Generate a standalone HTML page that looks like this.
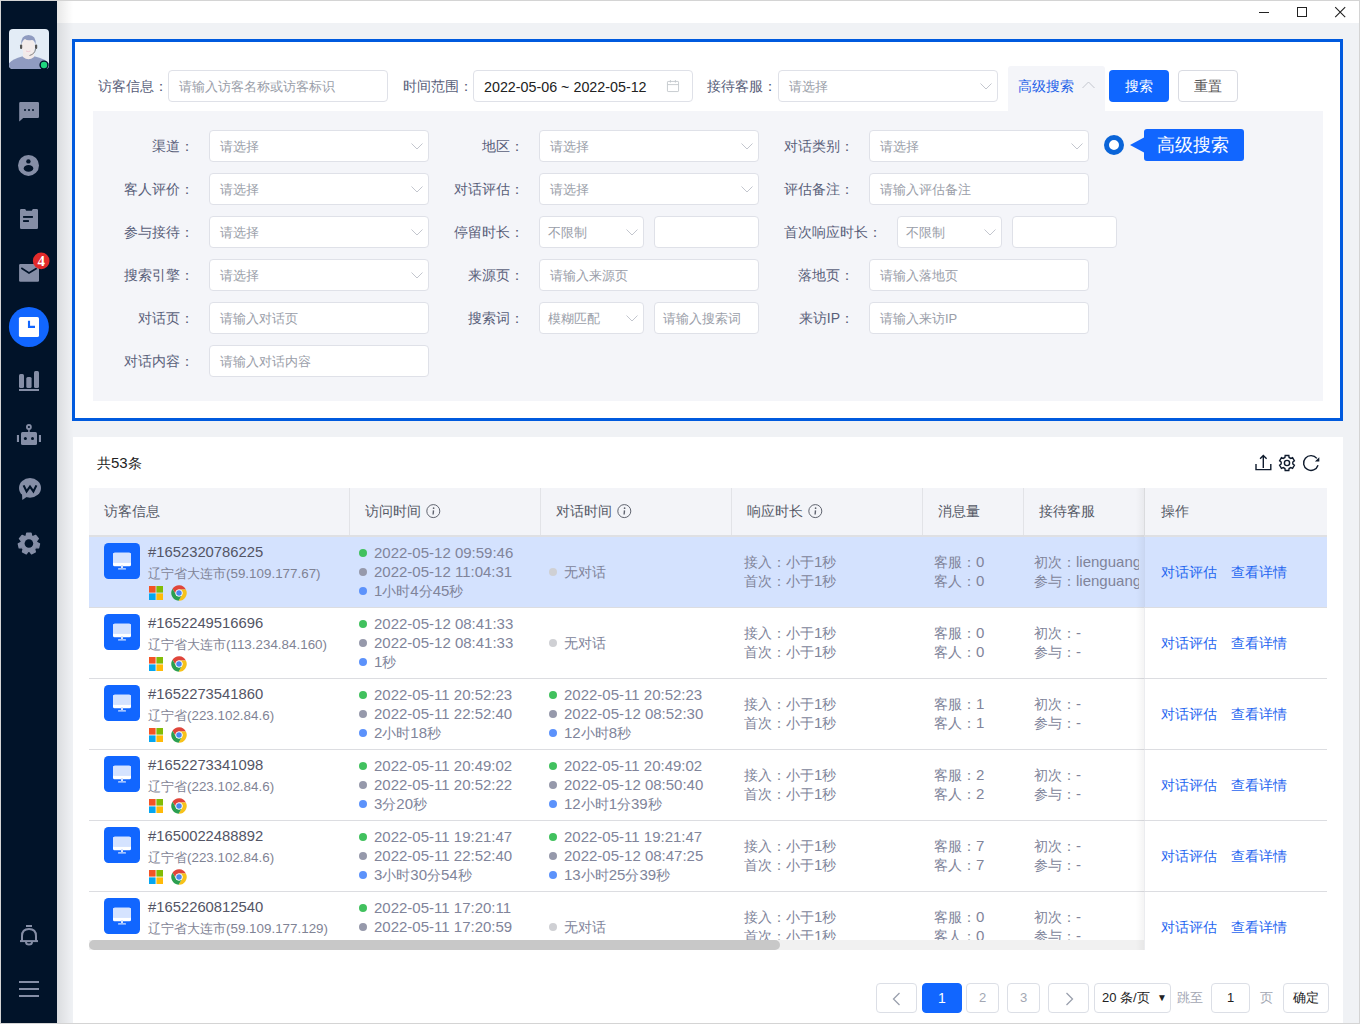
<!DOCTYPE html>
<html><head><meta charset="utf-8"><style>
*{box-sizing:border-box;margin:0;padding:0}
html,body{width:1360px;height:1024px;overflow:hidden}
body{position:relative;background:#f0f2f5;font-family:"Liberation Sans",sans-serif;font-size:14px;color:#333}
.abs{position:absolute}
.frame{position:absolute;left:0;top:0;width:1360px;height:1024px;border:1px solid #d4d4d4;pointer-events:none;z-index:50}
#side{position:absolute;left:1px;top:1px;width:56px;height:1022px;background:#011329;z-index:5}
#top{position:absolute;left:57px;top:1px;width:1302px;height:22px;background:#fff}
#shadow{position:absolute;left:57px;top:1px;width:16px;height:1022px;background:linear-gradient(to right,rgba(0,0,0,.09),rgba(0,0,0,0));z-index:4}
.wc{position:absolute;top:0;height:22px}
#card1{position:absolute;left:72px;top:39px;width:1271px;height:382px;background:#fff;border:3px solid #005ade}
#adv{position:absolute;left:93px;top:111px;width:1230px;height:290px;background:#f4f5f9}
.lbl{position:absolute;white-space:nowrap;color:#59607a;font-size:14px;line-height:32px;text-align:right}
.inp{position:absolute;height:32px;background:#fff;border:1px solid #dfe1e8;border-radius:4px;white-space:nowrap;line-height:30px;padding-left:10px;padding-top:1px;color:#9a9ea9;font-size:14px;overflow:hidden}
.sel::after{content:"";position:absolute;right:12px;top:10px;width:7px;height:7px;border-right:1px solid #b8bcc6;border-bottom:1px solid #b8bcc6;transform:rotate(45deg)}
#card2{position:absolute;left:73px;top:437px;width:1270px;height:586px;background:#fff}

.tx{position:absolute;white-space:nowrap}
.id{font-size:14.8px;line-height:20px;color:#535565}
.ad{font-size:13px;line-height:18px;color:#7f8395}
.dt{font-size:15px;line-height:20px;color:#80849a}
.du{font-size:14px;line-height:20px;color:#80849a}
.du b.n{font-weight:normal;font-size:15px}
.rs{font-size:14px;line-height:18.8px;color:#80849a}
.rs b.m{font-weight:normal;font-size:15px}
.op{font-size:14px;line-height:20px;color:#1f66f0}
.dot{position:absolute;width:8px;height:8px;border-radius:50%}
.vl{position:absolute;top:488px;width:1px;height:47px;background:#e2e3e7}
.th{position:absolute;top:501px;line-height:20px;font-size:14px;color:#555966;white-space:nowrap}
.pg{position:absolute;top:983px;height:30px;border:1px solid #dcdfe6;border-radius:4px;text-align:center;line-height:28px;font-size:14px;background:#fff}
</style></head><body>
<div id="side"></div>
<svg class="abs" style="left:0;top:0;z-index:6" width="60" height="1024" viewBox="0 0 60 1024">
<defs><clipPath id="avc"><rect x="9" y="29" width="40" height="40" rx="4"/></clipPath></defs>
<g clip-path="url(#avc)">
<rect x="9" y="29" width="40" height="40" fill="#e3ecf6"/>
<path d="M5 70 Q8 60 22 56.5 L35 56.5 Q50 60 53 70Z" fill="#8f9bc0"/>
<path d="M23 50 L34 50 L34 57 Q28.5 61.5 23 57Z" fill="#f1eae9"/>
<ellipse cx="28.2" cy="46" rx="6.6" ry="8" fill="#f3eceb"/>
<path d="M21.3 45 Q20.5 35 28.5 35 Q36.5 35 35.6 45 Q34.5 40 32 40 Q27 41 25 39 Q22.5 40 21.3 45Z" fill="#8f9bc0"/>
<rect x="20" y="44.5" width="2.2" height="4.5" rx="1.1" fill="#555"/>
<rect x="35" y="44.5" width="2.2" height="4.5" rx="1.1" fill="#555"/>
<path d="M35.5 49 Q35 54 29.5 55.5" fill="none" stroke="#555" stroke-width=".7"/>
<path d="M26 51 Q28.3 52.3 30.5 51" fill="none" stroke="#eabccc" stroke-width=".7"/>
</g>
<circle cx="44" cy="65" r="4.6" fill="#011329"/>
<circle cx="44" cy="65" r="3.2" fill="#1ed67e"/>
<g fill="#858ea6">
<!-- chat -->
<path d="M20.2 102H37.8Q39 102 39 103.2V116.7Q39 117.9 37.8 117.9H23.2L19.6 121.3Q19.2 121.6 19.2 121V103.2Q19.2 102 20.4 102Z"/>
<!-- person -->
<circle cx="28.5" cy="165.4" r="10.5"/>
<!-- clipboard -->
<path d="M21.3 209H25.2L26.2 210.8H31.8L32.8 209H36.7Q38 209 38 210.3V227.7Q38 229 36.7 229H21.3Q20 229 20 227.7V210.3Q20 209 21.3 209Z"/>
<!-- mail -->
<rect x="19.1" y="264" width="19.9" height="17.8" rx="1.2"/>
<!-- bars -->
<rect x="19" y="374" width="5" height="14" rx="1.5"/>
<rect x="26.3" y="377" width="5.3" height="11" rx="1.5"/>
<rect x="34" y="371" width="5" height="17" rx="1.5"/>
<rect x="19" y="389" width="20" height="2"/>
<!-- robot -->
<circle cx="28.9" cy="427" r="2.9"/>
<rect x="28.2" y="429" width="1.5" height="4"/>
<rect x="21" y="432" width="16" height="13" rx="1.5"/>
<rect x="16.9" y="435" width="2.1" height="7"/>
<rect x="38.9" y="435" width="2.1" height="7"/>
<!-- W bubble -->
<ellipse cx="30" cy="487.9" rx="11" ry="9.8"/>
<path d="M22 493 L22.3 500 L28 496Z"/>
<!-- gear -->
<path d="M26.12 536.11 L26.79 533.11 L31.01 533.11 L31.68 536.11 L32.95 536.71 L35.71 535.38 L38.34 538.67 L36.42 541.07 L36.73 542.43 L39.50 543.76 L38.56 547.86 L35.49 547.86 L34.62 548.95 L35.30 551.95 L31.51 553.77 L29.60 551.37 L28.20 551.37 L26.29 553.77 L22.50 551.95 L23.18 548.95 L22.31 547.86 L19.24 547.86 L18.30 543.76 L21.07 542.43 L21.38 541.07 L19.46 538.67 L22.09 535.38 L24.85 536.71Z" stroke="#858ea6" stroke-width="1.4" stroke-linejoin="round"/>
</g>
<g fill="#011329">
<circle cx="25" cy="110" r="1"/><circle cx="29" cy="110" r="1"/><circle cx="33" cy="110" r="1"/>
<circle cx="28.4" cy="161.4" r="2.2"/>
<ellipse cx="28.5" cy="168.4" rx="4.8" ry="3.4"/>
<rect x="23.1" y="216" width="9.8" height="1.9"/>
<rect x="23.1" y="220.1" width="5.8" height="1.9"/>
<circle cx="28.9" cy="427" r="1.1"/>
<circle cx="25.4" cy="438.5" r="1.5"/><circle cx="32.5" cy="438.5" r="1.5"/>
<circle cx="28.9" cy="543.5" r="4.3"/>
</g>
<path d="M21.3 268L29 273L36.7 268.3" fill="none" stroke="#011329" stroke-width="1.7"/>
<path d="M23.6 485.4L26.6 491.4L30 486.6L33.4 491.4L36.4 485.4" fill="none" stroke="#011329" stroke-width="2.1" stroke-linejoin="miter"/>
<!-- badge -->
<circle cx="41.2" cy="260.9" r="8.3" fill="#e22b2b"/>
<text x="41.3" y="266.3" font-family="Liberation Serif" font-weight="bold" font-size="15" fill="#fff" text-anchor="middle">4</text>
<!-- clock active -->
<circle cx="28.9" cy="326.9" r="20" fill="#1166ff"/>
<rect x="18.9" y="316.9" width="20.1" height="20.1" rx="1.6" fill="#fff"/>
<path d="M29 320.8V326.9H35" fill="none" stroke="#1166ff" stroke-width="2.1"/>
<!-- bell -->
<g fill="none" stroke="#858ea6" stroke-width="2">
<path d="M26 926H32"/>
<path d="M22 941V936Q22 929 29 929Q36 929 36 936V941"/>
<path d="M20 941.1H38"/>
<path d="M26 942Q26 944.5 29 944.5Q32 944.5 32 942"/>
<path d="M19 982H39M19 989H39M19 996H39"/>
</g>
</svg>

<div id="top"></div>
<div id="shadow"></div>
<div class="frame"></div>

<!-- window controls -->
<div class="abs" style="left:1259px;top:12px;width:10px;height:1px;background:#222"></div>
<div class="abs" style="left:1297px;top:7px;width:10px;height:10px;border:1px solid #222"></div>
<svg class="abs" style="left:1334px;top:6px" width="13" height="13" viewBox="0 0 13 13"><path d="M1.2 1.2L11.2 11.2M11.2 1.2L1.2 11.2" stroke="#222" stroke-width="1.1"/></svg>

<div id="card1"></div>
<div id="adv"></div>
<div class="lbl" style="left:98px;top:70px">访客信息：</div>
<div class="inp" style="left:168px;top:70px;width:220px;padding-left:10px;font-size:13px">请输入访客名称或访客标识</div>
<div class="lbl" style="left:403px;top:70px">时间范围：</div>
<div class="inp" style="left:473px;top:70px;width:220px;padding-left:10px;font-size:13px"><span style="color:#222;font-size:14.3px">2022-05-06 ~ 2022-05-12</span></div>
<div class="lbl" style="left:707px;top:70px">接待客服：</div>
<div class="inp" style="left:778px;top:70px;width:220px;padding-left:10px;font-size:13px">请选择</div>
<svg class="abs" style="left:980px;top:83px" width="12" height="7" viewBox="0 0 12 7"><path d="M0.5 0.5L6 6L11.5 0.5" fill="none" stroke="#c3c6ce" stroke-width="1"/></svg>
<div class="lbl" style="right:1166px;top:130px">渠道：</div>
<div class="inp" style="left:209px;top:130px;width:220px;padding-left:10px;font-size:13px">请选择</div>
<svg class="abs" style="left:411px;top:143px" width="12" height="7" viewBox="0 0 12 7"><path d="M0.5 0.5L6 6L11.5 0.5" fill="none" stroke="#c3c6ce" stroke-width="1"/></svg>
<div class="lbl" style="right:1166px;top:173px">客人评价：</div>
<div class="inp" style="left:209px;top:173px;width:220px;padding-left:10px;font-size:13px">请选择</div>
<svg class="abs" style="left:411px;top:186px" width="12" height="7" viewBox="0 0 12 7"><path d="M0.5 0.5L6 6L11.5 0.5" fill="none" stroke="#c3c6ce" stroke-width="1"/></svg>
<div class="lbl" style="right:1166px;top:216px">参与接待：</div>
<div class="inp" style="left:209px;top:216px;width:220px;padding-left:10px;font-size:13px">请选择</div>
<svg class="abs" style="left:411px;top:229px" width="12" height="7" viewBox="0 0 12 7"><path d="M0.5 0.5L6 6L11.5 0.5" fill="none" stroke="#c3c6ce" stroke-width="1"/></svg>
<div class="lbl" style="right:1166px;top:259px">搜索引擎：</div>
<div class="inp" style="left:209px;top:259px;width:220px;padding-left:10px;font-size:13px">请选择</div>
<svg class="abs" style="left:411px;top:272px" width="12" height="7" viewBox="0 0 12 7"><path d="M0.5 0.5L6 6L11.5 0.5" fill="none" stroke="#c3c6ce" stroke-width="1"/></svg>
<div class="lbl" style="right:1166px;top:302px">对话页：</div>
<div class="inp" style="left:209px;top:302px;width:220px;padding-left:10px;font-size:13px">请输入对话页</div>
<div class="lbl" style="right:1166px;top:345px">对话内容：</div>
<div class="inp" style="left:209px;top:345px;width:220px;padding-left:10px;font-size:13px">请输入对话内容</div>
<div class="lbl" style="right:836px;top:130px">地区：</div>
<div class="inp" style="left:539px;top:130px;width:220px;padding-left:10px;font-size:13px">请选择</div>
<svg class="abs" style="left:741px;top:143px" width="12" height="7" viewBox="0 0 12 7"><path d="M0.5 0.5L6 6L11.5 0.5" fill="none" stroke="#c3c6ce" stroke-width="1"/></svg>
<div class="lbl" style="right:836px;top:173px">对话评估：</div>
<div class="inp" style="left:539px;top:173px;width:220px;padding-left:10px;font-size:13px">请选择</div>
<svg class="abs" style="left:741px;top:186px" width="12" height="7" viewBox="0 0 12 7"><path d="M0.5 0.5L6 6L11.5 0.5" fill="none" stroke="#c3c6ce" stroke-width="1"/></svg>
<div class="lbl" style="right:836px;top:216px">停留时长：</div>
<div class="inp" style="left:539px;top:216px;width:105px;padding-left:8px;font-size:13px">不限制</div>
<svg class="abs" style="left:626px;top:229px" width="12" height="7" viewBox="0 0 12 7"><path d="M0.5 0.5L6 6L11.5 0.5" fill="none" stroke="#c3c6ce" stroke-width="1"/></svg>
<div class="inp" style="left:654px;top:216px;width:105px;padding-left:10px;font-size:13px"></div>
<div class="lbl" style="right:836px;top:259px">来源页：</div>
<div class="inp" style="left:539px;top:259px;width:220px;padding-left:10px;font-size:13px">请输入来源页</div>
<div class="lbl" style="right:836px;top:302px">搜索词：</div>
<div class="inp" style="left:539px;top:302px;width:105px;padding-left:8px;font-size:13px">模糊匹配</div>
<svg class="abs" style="left:626px;top:315px" width="12" height="7" viewBox="0 0 12 7"><path d="M0.5 0.5L6 6L11.5 0.5" fill="none" stroke="#c3c6ce" stroke-width="1"/></svg>
<div class="inp" style="left:654px;top:302px;width:105px;padding-left:8px;font-size:13px">请输入搜索词</div>
<div class="lbl" style="right:506px;top:130px">对话类别：</div>
<div class="inp" style="left:869px;top:130px;width:220px;padding-left:10px;font-size:13px">请选择</div>
<svg class="abs" style="left:1071px;top:143px" width="12" height="7" viewBox="0 0 12 7"><path d="M0.5 0.5L6 6L11.5 0.5" fill="none" stroke="#c3c6ce" stroke-width="1"/></svg>
<div class="lbl" style="right:506px;top:173px">评估备注：</div>
<div class="inp" style="left:869px;top:173px;width:220px;padding-left:10px;font-size:13px">请输入评估备注</div>
<div class="lbl" style="left:784px;top:216px">首次响应时长：</div>
<div class="inp" style="left:897px;top:216px;width:105px;padding-left:8px;font-size:13px">不限制</div>
<svg class="abs" style="left:984px;top:229px" width="12" height="7" viewBox="0 0 12 7"><path d="M0.5 0.5L6 6L11.5 0.5" fill="none" stroke="#c3c6ce" stroke-width="1"/></svg>
<div class="inp" style="left:1012px;top:216px;width:105px;padding-left:10px;font-size:13px"></div>
<div class="lbl" style="right:506px;top:259px">落地页：</div>
<div class="inp" style="left:869px;top:259px;width:220px;padding-left:10px;font-size:13px">请输入落地页</div>
<div class="lbl" style="right:506px;top:302px">来访IP：</div>
<div class="inp" style="left:869px;top:302px;width:220px;padding-left:10px;font-size:13px">请输入来访IP</div>
<svg class="abs" style="left:666px;top:79px" width="14" height="14" viewBox="0 0 14 14"><g fill="none" stroke="#c3c7cc" stroke-width="0.9"><rect x="1.45" y="2.45" width="11.1" height="10.1" rx=".6"/><path d="M1.5 5.6H12.5M4.4 1V3.6M9.4 1V3.6"/></g></svg>
<!-- tab + buttons -->
<div class="abs" style="left:1008px;top:66px;width:97px;height:45px;background:#f4f5f9;border-radius:3px 3px 0 0"></div>
<div class="abs" style="left:1018px;top:70px;line-height:32px;color:#1f62e8;white-space:nowrap">高级搜索</div>
<svg class="abs" style="left:1082px;top:81px" width="13" height="8" viewBox="0 0 13 8"><path d="M0.5 7L6.5 1L12.5 7" fill="none" stroke="#c3c6ce" stroke-width="1"/></svg>
<div class="abs" style="left:1109px;top:70px;width:60px;height:32px;background:#0f66ff;border-radius:4px;color:#fff;text-align:center;line-height:32px">搜索</div>
<div class="abs" style="left:1178px;top:70px;width:60px;height:32px;background:#fff;border:1px solid #d9dbe2;border-radius:4px;color:#555;text-align:center;line-height:30px">重置</div>
<!-- annotation -->
<div class="abs" style="left:1104px;top:135px;width:20px;height:20px;border-radius:50%;border:5px solid #0a64d8;background:#fff"></div>
<svg class="abs" style="left:1129px;top:129px" width="115" height="32" viewBox="0 0 115 32"><path d="M1 16L15 8.5V3Q15 0 18 0H112Q115 0 115 3V29Q115 32 112 32H18Q15 32 15 29V23.5Z" fill="#1166ff"/></svg>
<div class="abs" style="left:1157px;top:129px;line-height:32px;font-size:18px;color:#fff;white-space:nowrap">高级搜索</div>


<div id="card2"></div>

<!-- table -->
<div class="abs" style="left:97px;top:453px;line-height:20px;color:#222;white-space:nowrap">共<span style="font-size:15px">53</span>条</div>
<div id="tbl" class="abs" style="left:0;top:0;width:1360px;height:940px;overflow:hidden;clip-path:inset(0 0 0 0)">
<div class="abs" style="left:89px;top:488px;width:1238px;height:49px;background:#f3f4f8;border-bottom:2px solid #dfe0e3"></div>
<div class="vl" style="left:349px"></div><div class="vl" style="left:540px"></div><div class="vl" style="left:731px"></div><div class="vl" style="left:922px"></div><div class="vl" style="left:1023px"></div>
<div class="th" style="left:104px">访客信息</div>
<div class="th" style="left:365px">访问时间</div><svg class="abs" style="left:426px;top:504px" width="15" height="15" viewBox="0 0 15 15"><circle cx="7.3" cy="7.1" r="6.5" fill="none" stroke="#5f636e" stroke-width="1"/><circle cx="7.6" cy="4.2" r=".85" fill="#5f636e"/><path d="M7.5 6.4L7.1 10.5" stroke="#5f636e" stroke-width="1.4"/></svg>
<div class="th" style="left:556px">对话时间</div><svg class="abs" style="left:617px;top:504px" width="15" height="15" viewBox="0 0 15 15"><circle cx="7.3" cy="7.1" r="6.5" fill="none" stroke="#5f636e" stroke-width="1"/><circle cx="7.6" cy="4.2" r=".85" fill="#5f636e"/><path d="M7.5 6.4L7.1 10.5" stroke="#5f636e" stroke-width="1.4"/></svg>
<div class="th" style="left:747px">响应时长</div><svg class="abs" style="left:808px;top:504px" width="15" height="15" viewBox="0 0 15 15"><circle cx="7.3" cy="7.1" r="6.5" fill="none" stroke="#5f636e" stroke-width="1"/><circle cx="7.6" cy="4.2" r=".85" fill="#5f636e"/><path d="M7.5 6.4L7.1 10.5" stroke="#5f636e" stroke-width="1.4"/></svg>
<div class="th" style="left:938px">消息量</div>
<div class="th" style="left:1039px">接待客服</div>
<div class="abs" style="left:89px;top:537px;width:1238px;height:70px;background:#d4e2fe"></div>
<div class="abs" style="left:89px;top:607px;width:1238px;height:1px;background:#dcdde1"></div>
<svg class="abs" style="left:104px;top:543px" width="36" height="36" viewBox="0 0 36 36"><rect width="36" height="36" rx="4.5" fill="#1166ff"/><rect x="9" y="9.7" width="18" height="13.6" rx="1.6" fill="#fff"/><rect x="9" y="9.7" width="18" height="10" rx="1.6" fill="#d5e3ff"/><rect x="9" y="16" width="18" height="3.7" fill="#d5e3ff"/><rect x="17" y="22" width="2" height="3" fill="#d5e3ff"/><rect x="14" y="25.2" width="8" height="1.3" rx=".6" fill="#d5e3ff"/></svg>
<div class="tx id" style="left:148px;top:542px">#1652320786225</div>
<div class="tx ad" style="left:148px;top:565px">辽宁省大连市<span style="font-size:13.4px">(59.109.177.67)</span></div>
<svg class="abs" style="left:149px;top:586px" width="14" height="14" viewBox="0 0 14 14"><rect width="6.6" height="6.6" fill="#f35325"/><rect x="7.4" width="6.6" height="6.6" fill="#81bc06"/><rect y="7.4" width="6.6" height="6.6" fill="#05a6f0"/><rect x="7.4" y="7.4" width="6.6" height="6.6" fill="#ffba08"/></svg>
<svg class="abs" style="left:171px;top:585px" width="16" height="16" viewBox="-8 -8 16 16"><path d="M-6.458 -4.194A7.7 7.7 0 0 1 6.861 -3.496L0.000 -3.500A3.5 3.5 0 0 0 -3.031 1.750Z" fill="#e0453a"/><path d="M-6.458 -4.194A7.7 7.7 0 0 1 6.861 -3.496L0.000 -3.500A3.5 3.5 0 0 0 -3.031 1.750Z" fill="#f6c21a" transform="rotate(120)"/><path d="M-6.458 -4.194A7.7 7.7 0 0 1 6.861 -3.496L0.000 -3.500A3.5 3.5 0 0 0 -3.031 1.750Z" fill="#2b9f4f" transform="rotate(240)"/><circle r="3.55" fill="#fff"/><circle r="2.75" fill="#4a86f0"/></svg>
<div class="dot" style="left:359px;top:548.5px;background:#41c15e"></div>
<div class="tx dt" style="left:374px;top:542.5px">2022-05-12 09:59:46</div>
<div class="dot" style="left:359px;top:567.8px;background:#9699ab"></div>
<div class="tx dt" style="left:374px;top:561.8px">2022-05-12 11:04:31</div>
<div class="dot" style="left:359px;top:587.1px;background:#5c92fb"></div>
<div class="tx du" style="left:374px;top:581.1px"><b class="n">1</b>小时<b class="n">4</b>分<b class="n">45</b>秒</div>
<div class="dot" style="left:549px;top:568px;background:#cfd0d4"></div>
<div class="tx du" style="left:564px;top:562px">无对话</div>
<div class="tx rs" style="left:744px;top:553px">接入：小于<b class="m">1</b>秒<br>首次：小于<b class="m">1</b>秒</div>
<div class="tx rs" style="left:934px;top:553px">客服：<b class="m">0</b><br>客人：<b class="m">0</b></div>
<div class="tx rs" style="left:1034px;top:553px;width:105px;overflow:hidden">初次：<b class="m">lienguang</b><br>参与：<b class="m">lienguang</b></div>
<div class="abs" style="left:89px;top:678px;width:1238px;height:1px;background:#dcdde1"></div>
<svg class="abs" style="left:104px;top:614px" width="36" height="36" viewBox="0 0 36 36"><rect width="36" height="36" rx="4.5" fill="#1166ff"/><rect x="9" y="9.7" width="18" height="13.6" rx="1.6" fill="#fff"/><rect x="9" y="9.7" width="18" height="10" rx="1.6" fill="#d5e3ff"/><rect x="9" y="16" width="18" height="3.7" fill="#d5e3ff"/><rect x="17" y="22" width="2" height="3" fill="#d5e3ff"/><rect x="14" y="25.2" width="8" height="1.3" rx=".6" fill="#d5e3ff"/></svg>
<div class="tx id" style="left:148px;top:613px">#1652249516696</div>
<div class="tx ad" style="left:148px;top:636px">辽宁省大连市<span style="font-size:13.4px">(113.234.84.160)</span></div>
<svg class="abs" style="left:149px;top:657px" width="14" height="14" viewBox="0 0 14 14"><rect width="6.6" height="6.6" fill="#f35325"/><rect x="7.4" width="6.6" height="6.6" fill="#81bc06"/><rect y="7.4" width="6.6" height="6.6" fill="#05a6f0"/><rect x="7.4" y="7.4" width="6.6" height="6.6" fill="#ffba08"/></svg>
<svg class="abs" style="left:171px;top:656px" width="16" height="16" viewBox="-8 -8 16 16"><path d="M-6.458 -4.194A7.7 7.7 0 0 1 6.861 -3.496L0.000 -3.500A3.5 3.5 0 0 0 -3.031 1.750Z" fill="#e0453a"/><path d="M-6.458 -4.194A7.7 7.7 0 0 1 6.861 -3.496L0.000 -3.500A3.5 3.5 0 0 0 -3.031 1.750Z" fill="#f6c21a" transform="rotate(120)"/><path d="M-6.458 -4.194A7.7 7.7 0 0 1 6.861 -3.496L0.000 -3.500A3.5 3.5 0 0 0 -3.031 1.750Z" fill="#2b9f4f" transform="rotate(240)"/><circle r="3.55" fill="#fff"/><circle r="2.75" fill="#4a86f0"/></svg>
<div class="dot" style="left:359px;top:619.5px;background:#41c15e"></div>
<div class="tx dt" style="left:374px;top:613.5px">2022-05-12 08:41:33</div>
<div class="dot" style="left:359px;top:638.8px;background:#9699ab"></div>
<div class="tx dt" style="left:374px;top:632.8px">2022-05-12 08:41:33</div>
<div class="dot" style="left:359px;top:658.1px;background:#5c92fb"></div>
<div class="tx du" style="left:374px;top:652.1px"><b class="n">1</b>秒</div>
<div class="dot" style="left:549px;top:639px;background:#cfd0d4"></div>
<div class="tx du" style="left:564px;top:633px">无对话</div>
<div class="tx rs" style="left:744px;top:624px">接入：小于<b class="m">1</b>秒<br>首次：小于<b class="m">1</b>秒</div>
<div class="tx rs" style="left:934px;top:624px">客服：<b class="m">0</b><br>客人：<b class="m">0</b></div>
<div class="tx rs" style="left:1034px;top:624px;width:105px;overflow:hidden">初次：<b class="m">-</b><br>参与：<b class="m">-</b></div>
<div class="abs" style="left:89px;top:749px;width:1238px;height:1px;background:#dcdde1"></div>
<svg class="abs" style="left:104px;top:685px" width="36" height="36" viewBox="0 0 36 36"><rect width="36" height="36" rx="4.5" fill="#1166ff"/><rect x="9" y="9.7" width="18" height="13.6" rx="1.6" fill="#fff"/><rect x="9" y="9.7" width="18" height="10" rx="1.6" fill="#d5e3ff"/><rect x="9" y="16" width="18" height="3.7" fill="#d5e3ff"/><rect x="17" y="22" width="2" height="3" fill="#d5e3ff"/><rect x="14" y="25.2" width="8" height="1.3" rx=".6" fill="#d5e3ff"/></svg>
<div class="tx id" style="left:148px;top:684px">#1652273541860</div>
<div class="tx ad" style="left:148px;top:707px">辽宁省<span style="font-size:13.4px">(223.102.84.6)</span></div>
<svg class="abs" style="left:149px;top:728px" width="14" height="14" viewBox="0 0 14 14"><rect width="6.6" height="6.6" fill="#f35325"/><rect x="7.4" width="6.6" height="6.6" fill="#81bc06"/><rect y="7.4" width="6.6" height="6.6" fill="#05a6f0"/><rect x="7.4" y="7.4" width="6.6" height="6.6" fill="#ffba08"/></svg>
<svg class="abs" style="left:171px;top:727px" width="16" height="16" viewBox="-8 -8 16 16"><path d="M-6.458 -4.194A7.7 7.7 0 0 1 6.861 -3.496L0.000 -3.500A3.5 3.5 0 0 0 -3.031 1.750Z" fill="#e0453a"/><path d="M-6.458 -4.194A7.7 7.7 0 0 1 6.861 -3.496L0.000 -3.500A3.5 3.5 0 0 0 -3.031 1.750Z" fill="#f6c21a" transform="rotate(120)"/><path d="M-6.458 -4.194A7.7 7.7 0 0 1 6.861 -3.496L0.000 -3.500A3.5 3.5 0 0 0 -3.031 1.750Z" fill="#2b9f4f" transform="rotate(240)"/><circle r="3.55" fill="#fff"/><circle r="2.75" fill="#4a86f0"/></svg>
<div class="dot" style="left:359px;top:690.5px;background:#41c15e"></div>
<div class="tx dt" style="left:374px;top:684.5px">2022-05-11 20:52:23</div>
<div class="dot" style="left:359px;top:709.8px;background:#9699ab"></div>
<div class="tx dt" style="left:374px;top:703.8px">2022-05-11 22:52:40</div>
<div class="dot" style="left:359px;top:729.1px;background:#5c92fb"></div>
<div class="tx du" style="left:374px;top:723.1px"><b class="n">2</b>小时<b class="n">18</b>秒</div>
<div class="dot" style="left:549px;top:690.5px;background:#41c15e"></div>
<div class="tx dt" style="left:564px;top:684.5px">2022-05-11 20:52:23</div>
<div class="dot" style="left:549px;top:709.8px;background:#9699ab"></div>
<div class="tx dt" style="left:564px;top:703.8px">2022-05-12 08:52:30</div>
<div class="dot" style="left:549px;top:729.1px;background:#5c92fb"></div>
<div class="tx du" style="left:564px;top:723.1px"><b class="n">12</b>小时<b class="n">8</b>秒</div>
<div class="tx rs" style="left:744px;top:695px">接入：小于<b class="m">1</b>秒<br>首次：小于<b class="m">1</b>秒</div>
<div class="tx rs" style="left:934px;top:695px">客服：<b class="m">1</b><br>客人：<b class="m">1</b></div>
<div class="tx rs" style="left:1034px;top:695px;width:105px;overflow:hidden">初次：<b class="m">-</b><br>参与：<b class="m">-</b></div>
<div class="abs" style="left:89px;top:820px;width:1238px;height:1px;background:#dcdde1"></div>
<svg class="abs" style="left:104px;top:756px" width="36" height="36" viewBox="0 0 36 36"><rect width="36" height="36" rx="4.5" fill="#1166ff"/><rect x="9" y="9.7" width="18" height="13.6" rx="1.6" fill="#fff"/><rect x="9" y="9.7" width="18" height="10" rx="1.6" fill="#d5e3ff"/><rect x="9" y="16" width="18" height="3.7" fill="#d5e3ff"/><rect x="17" y="22" width="2" height="3" fill="#d5e3ff"/><rect x="14" y="25.2" width="8" height="1.3" rx=".6" fill="#d5e3ff"/></svg>
<div class="tx id" style="left:148px;top:755px">#1652273341098</div>
<div class="tx ad" style="left:148px;top:778px">辽宁省<span style="font-size:13.4px">(223.102.84.6)</span></div>
<svg class="abs" style="left:149px;top:799px" width="14" height="14" viewBox="0 0 14 14"><rect width="6.6" height="6.6" fill="#f35325"/><rect x="7.4" width="6.6" height="6.6" fill="#81bc06"/><rect y="7.4" width="6.6" height="6.6" fill="#05a6f0"/><rect x="7.4" y="7.4" width="6.6" height="6.6" fill="#ffba08"/></svg>
<svg class="abs" style="left:171px;top:798px" width="16" height="16" viewBox="-8 -8 16 16"><path d="M-6.458 -4.194A7.7 7.7 0 0 1 6.861 -3.496L0.000 -3.500A3.5 3.5 0 0 0 -3.031 1.750Z" fill="#e0453a"/><path d="M-6.458 -4.194A7.7 7.7 0 0 1 6.861 -3.496L0.000 -3.500A3.5 3.5 0 0 0 -3.031 1.750Z" fill="#f6c21a" transform="rotate(120)"/><path d="M-6.458 -4.194A7.7 7.7 0 0 1 6.861 -3.496L0.000 -3.500A3.5 3.5 0 0 0 -3.031 1.750Z" fill="#2b9f4f" transform="rotate(240)"/><circle r="3.55" fill="#fff"/><circle r="2.75" fill="#4a86f0"/></svg>
<div class="dot" style="left:359px;top:761.5px;background:#41c15e"></div>
<div class="tx dt" style="left:374px;top:755.5px">2022-05-11 20:49:02</div>
<div class="dot" style="left:359px;top:780.8px;background:#9699ab"></div>
<div class="tx dt" style="left:374px;top:774.8px">2022-05-11 20:52:22</div>
<div class="dot" style="left:359px;top:800.1px;background:#5c92fb"></div>
<div class="tx du" style="left:374px;top:794.1px"><b class="n">3</b>分<b class="n">20</b>秒</div>
<div class="dot" style="left:549px;top:761.5px;background:#41c15e"></div>
<div class="tx dt" style="left:564px;top:755.5px">2022-05-11 20:49:02</div>
<div class="dot" style="left:549px;top:780.8px;background:#9699ab"></div>
<div class="tx dt" style="left:564px;top:774.8px">2022-05-12 08:50:40</div>
<div class="dot" style="left:549px;top:800.1px;background:#5c92fb"></div>
<div class="tx du" style="left:564px;top:794.1px"><b class="n">12</b>小时<b class="n">1</b>分<b class="n">39</b>秒</div>
<div class="tx rs" style="left:744px;top:766px">接入：小于<b class="m">1</b>秒<br>首次：小于<b class="m">1</b>秒</div>
<div class="tx rs" style="left:934px;top:766px">客服：<b class="m">2</b><br>客人：<b class="m">2</b></div>
<div class="tx rs" style="left:1034px;top:766px;width:105px;overflow:hidden">初次：<b class="m">-</b><br>参与：<b class="m">-</b></div>
<div class="abs" style="left:89px;top:891px;width:1238px;height:1px;background:#dcdde1"></div>
<svg class="abs" style="left:104px;top:827px" width="36" height="36" viewBox="0 0 36 36"><rect width="36" height="36" rx="4.5" fill="#1166ff"/><rect x="9" y="9.7" width="18" height="13.6" rx="1.6" fill="#fff"/><rect x="9" y="9.7" width="18" height="10" rx="1.6" fill="#d5e3ff"/><rect x="9" y="16" width="18" height="3.7" fill="#d5e3ff"/><rect x="17" y="22" width="2" height="3" fill="#d5e3ff"/><rect x="14" y="25.2" width="8" height="1.3" rx=".6" fill="#d5e3ff"/></svg>
<div class="tx id" style="left:148px;top:826px">#1650022488892</div>
<div class="tx ad" style="left:148px;top:849px">辽宁省<span style="font-size:13.4px">(223.102.84.6)</span></div>
<svg class="abs" style="left:149px;top:870px" width="14" height="14" viewBox="0 0 14 14"><rect width="6.6" height="6.6" fill="#f35325"/><rect x="7.4" width="6.6" height="6.6" fill="#81bc06"/><rect y="7.4" width="6.6" height="6.6" fill="#05a6f0"/><rect x="7.4" y="7.4" width="6.6" height="6.6" fill="#ffba08"/></svg>
<svg class="abs" style="left:171px;top:869px" width="16" height="16" viewBox="-8 -8 16 16"><path d="M-6.458 -4.194A7.7 7.7 0 0 1 6.861 -3.496L0.000 -3.500A3.5 3.5 0 0 0 -3.031 1.750Z" fill="#e0453a"/><path d="M-6.458 -4.194A7.7 7.7 0 0 1 6.861 -3.496L0.000 -3.500A3.5 3.5 0 0 0 -3.031 1.750Z" fill="#f6c21a" transform="rotate(120)"/><path d="M-6.458 -4.194A7.7 7.7 0 0 1 6.861 -3.496L0.000 -3.500A3.5 3.5 0 0 0 -3.031 1.750Z" fill="#2b9f4f" transform="rotate(240)"/><circle r="3.55" fill="#fff"/><circle r="2.75" fill="#4a86f0"/></svg>
<div class="dot" style="left:359px;top:832.5px;background:#41c15e"></div>
<div class="tx dt" style="left:374px;top:826.5px">2022-05-11 19:21:47</div>
<div class="dot" style="left:359px;top:851.8px;background:#9699ab"></div>
<div class="tx dt" style="left:374px;top:845.8px">2022-05-11 22:52:40</div>
<div class="dot" style="left:359px;top:871.1px;background:#5c92fb"></div>
<div class="tx du" style="left:374px;top:865.1px"><b class="n">3</b>小时<b class="n">30</b>分<b class="n">54</b>秒</div>
<div class="dot" style="left:549px;top:832.5px;background:#41c15e"></div>
<div class="tx dt" style="left:564px;top:826.5px">2022-05-11 19:21:47</div>
<div class="dot" style="left:549px;top:851.8px;background:#9699ab"></div>
<div class="tx dt" style="left:564px;top:845.8px">2022-05-12 08:47:25</div>
<div class="dot" style="left:549px;top:871.1px;background:#5c92fb"></div>
<div class="tx du" style="left:564px;top:865.1px"><b class="n">13</b>小时<b class="n">25</b>分<b class="n">39</b>秒</div>
<div class="tx rs" style="left:744px;top:837px">接入：小于<b class="m">1</b>秒<br>首次：小于<b class="m">1</b>秒</div>
<div class="tx rs" style="left:934px;top:837px">客服：<b class="m">7</b><br>客人：<b class="m">7</b></div>
<div class="tx rs" style="left:1034px;top:837px;width:105px;overflow:hidden">初次：<b class="m">-</b><br>参与：<b class="m">-</b></div>
<div class="abs" style="left:89px;top:962px;width:1238px;height:1px;background:#dcdde1"></div>
<svg class="abs" style="left:104px;top:898px" width="36" height="36" viewBox="0 0 36 36"><rect width="36" height="36" rx="4.5" fill="#1166ff"/><rect x="9" y="9.7" width="18" height="13.6" rx="1.6" fill="#fff"/><rect x="9" y="9.7" width="18" height="10" rx="1.6" fill="#d5e3ff"/><rect x="9" y="16" width="18" height="3.7" fill="#d5e3ff"/><rect x="17" y="22" width="2" height="3" fill="#d5e3ff"/><rect x="14" y="25.2" width="8" height="1.3" rx=".6" fill="#d5e3ff"/></svg>
<div class="tx id" style="left:148px;top:897px">#1652260812540</div>
<div class="tx ad" style="left:148px;top:920px">辽宁省大连市<span style="font-size:13.4px">(59.109.177.129)</span></div>
<svg class="abs" style="left:149px;top:941px" width="14" height="14" viewBox="0 0 14 14"><rect width="6.6" height="6.6" fill="#f35325"/><rect x="7.4" width="6.6" height="6.6" fill="#81bc06"/><rect y="7.4" width="6.6" height="6.6" fill="#05a6f0"/><rect x="7.4" y="7.4" width="6.6" height="6.6" fill="#ffba08"/></svg>
<svg class="abs" style="left:171px;top:940px" width="16" height="16" viewBox="-8 -8 16 16"><path d="M-6.458 -4.194A7.7 7.7 0 0 1 6.861 -3.496L0.000 -3.500A3.5 3.5 0 0 0 -3.031 1.750Z" fill="#e0453a"/><path d="M-6.458 -4.194A7.7 7.7 0 0 1 6.861 -3.496L0.000 -3.500A3.5 3.5 0 0 0 -3.031 1.750Z" fill="#f6c21a" transform="rotate(120)"/><path d="M-6.458 -4.194A7.7 7.7 0 0 1 6.861 -3.496L0.000 -3.500A3.5 3.5 0 0 0 -3.031 1.750Z" fill="#2b9f4f" transform="rotate(240)"/><circle r="3.55" fill="#fff"/><circle r="2.75" fill="#4a86f0"/></svg>
<div class="dot" style="left:359px;top:903.5px;background:#41c15e"></div>
<div class="tx dt" style="left:374px;top:897.5px">2022-05-11 17:20:11</div>
<div class="dot" style="left:359px;top:922.8px;background:#9699ab"></div>
<div class="tx dt" style="left:374px;top:916.8px">2022-05-11 17:20:59</div>
<div class="dot" style="left:359px;top:942.1px;background:#5c92fb"></div>
<div class="tx du" style="left:374px;top:936.1px"><b class="n">1</b>分</div>
<div class="dot" style="left:549px;top:923px;background:#cfd0d4"></div>
<div class="tx du" style="left:564px;top:917px">无对话</div>
<div class="tx rs" style="left:744px;top:908px">接入：小于<b class="m">1</b>秒<br>首次：小于<b class="m">1</b>秒</div>
<div class="tx rs" style="left:934px;top:908px">客服：<b class="m">0</b><br>客人：<b class="m">0</b></div>
<div class="tx rs" style="left:1034px;top:908px;width:105px;overflow:hidden">初次：<b class="m">-</b><br>参与：<b class="m">-</b></div>
</div>
<!-- scrollbar -->
<div class="abs" style="left:89px;top:940px;width:1056px;height:10px;background:#f1f1f1"></div>
<div class="abs" style="left:89px;top:940px;width:691px;height:10px;background:#c8c8c8;border-radius:5px"></div>
<!-- sticky -->
<div class="abs" style="left:1136px;top:488px;width:8px;height:462px;background:linear-gradient(to right,rgba(0,0,0,0),rgba(0,0,0,.045))"></div>
<div class="abs" style="left:1144px;top:488px;width:183px;height:462px;background:#fff;border-left:1px solid #ebecef"></div>
<div class="abs" style="left:1144px;top:488px;width:183px;height:49px;background:#f3f4f8;border-bottom:2px solid #dfe0e3;border-left:1px solid #dadbde"></div>
<div class="th" style="left:1161px">操作</div>
<div class="abs" style="left:1144px;top:537px;width:183px;height:70px;background:#d4e2fe;border-left:1px solid #c9d6f0"></div>
<div class="abs" style="left:1144px;top:607px;width:183px;height:1px;background:#dcdde1"></div>
<div class="abs" style="left:1144px;top:678px;width:183px;height:1px;background:#dcdde1"></div>
<div class="abs" style="left:1144px;top:749px;width:183px;height:1px;background:#dcdde1"></div>
<div class="abs" style="left:1144px;top:820px;width:183px;height:1px;background:#dcdde1"></div>
<div class="abs" style="left:1144px;top:891px;width:183px;height:1px;background:#dcdde1"></div>
<div class="tx op" style="left:1161px;top:562px">对话评估</div><div class="tx op" style="left:1231px;top:562px">查看详情</div>
<div class="tx op" style="left:1161px;top:633px">对话评估</div><div class="tx op" style="left:1231px;top:633px">查看详情</div>
<div class="tx op" style="left:1161px;top:704px">对话评估</div><div class="tx op" style="left:1231px;top:704px">查看详情</div>
<div class="tx op" style="left:1161px;top:775px">对话评估</div><div class="tx op" style="left:1231px;top:775px">查看详情</div>
<div class="tx op" style="left:1161px;top:846px">对话评估</div><div class="tx op" style="left:1231px;top:846px">查看详情</div>
<div class="tx op" style="left:1161px;top:917px">对话评估</div><div class="tx op" style="left:1231px;top:917px">查看详情</div>
<!-- toolbar icons -->
<svg class="abs" style="left:1254px;top:453px" width="70" height="20" viewBox="0 0 70 20">
<g fill="none" stroke="#0f1b2d" stroke-width="1.4">
<path d="M2 11V16.6H16.8V11"/><path d="M9.3 15V2.5M6.1 5.8L9.3 2.5L12.6 5.8"/>
<path d="M30.92 4.48 L31.17 2.52 L34.83 2.52 L35.08 4.48 L36.74 5.44 L38.56 4.68 L40.39 7.85 L38.82 9.04 L38.82 10.96 L40.39 12.15 L38.56 15.32 L36.74 14.56 L35.08 15.52 L34.83 17.48 L31.17 17.48 L30.92 15.52 L29.26 14.56 L27.44 15.32 L25.61 12.15 L27.18 10.96 L27.18 9.04 L25.61 7.85 L27.44 4.68 L29.26 5.44Z" stroke-linejoin="miter"/><circle cx="33" cy="10" r="2.6"/>
<path d="M62.83 5.44A7.4 7.4 0 1 0 64.04 12.29"/>
</g>
<path d="M65.3 4.2L65.3 8.6L60.9 8.6Z" fill="#0f1b2d"/>
</svg>
<!-- pagination -->
<div class="pg" style="left:876px;width:41px"><svg class="abs" style="left:14px;top:8px" width="12" height="14" viewBox="0 0 12 14"><path d="M8.5 1L2.5 7L8.5 13" fill="none" stroke="#9aa0ad" stroke-width="1.3"/></svg></div>
<div class="pg" style="left:922px;width:40px;background:#1166ff;border-color:#1166ff;color:#fff">1</div>
<div class="pg" style="left:966px;width:33px;color:#a3a7b3;font-size:13px">2</div>
<div class="pg" style="left:1007px;width:33px;color:#a3a7b3;font-size:13px">3</div>
<div class="pg" style="left:1048px;width:41px"><svg class="abs" style="left:14px;top:8px" width="12" height="14" viewBox="0 0 12 14"><path d="M3.5 1L9.5 7L3.5 13" fill="none" stroke="#9aa0ad" stroke-width="1.3"/></svg></div>
<div class="pg" style="left:1094px;width:77px;text-align:left;padding-left:7px;color:#222;font-size:13px">20 条/页<span class="abs" style="left:62px;top:0;font-size:10px">▼</span></div>
<div class="abs" style="left:1177px;top:983px;line-height:30px;color:#a3a7b3;font-size:13px;white-space:nowrap">跳至</div>
<div class="pg" style="left:1211px;width:39px;color:#222;font-size:13px">1</div>
<div class="abs" style="left:1260px;top:983px;line-height:30px;color:#a3a7b3;font-size:13px">页</div>
<div class="pg" style="left:1283px;width:46px;color:#222;font-size:13px">确定</div>

</body></html>
